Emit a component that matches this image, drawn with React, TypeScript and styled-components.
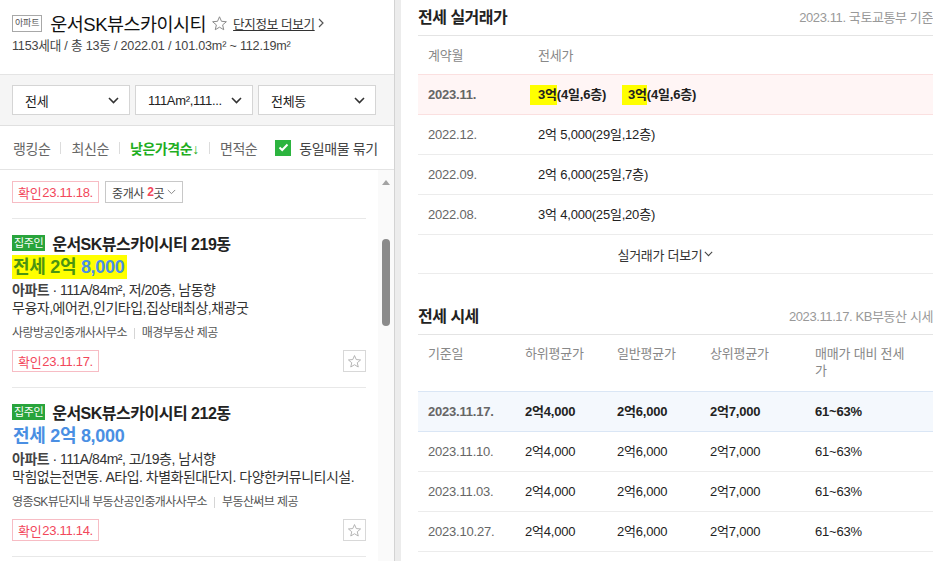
import React from "react";
import styled, { createGlobalStyle } from "styled-components";

const GlobalStyle = createGlobalStyle`
  html, body {
    margin: 0;
    padding: 0;
  }
  body {
    font-family: "Liberation Sans", "Noto Sans CJK KR", sans-serif;
    color: #222;
    background: #fff;
    overflow: hidden;
  }
  * {
    box-sizing: border-box;
  }
`;

const Page = styled.div`
  display: flex;
  width: 933px;
  height: 561px;
  overflow: hidden;
`;

/* ---------- left panel ---------- */

const LeftPanel = styled.aside`
  width: 395px;
  flex-shrink: 0;
  display: flex;
  flex-direction: column;
  border-right: 1px solid #d3d3d3;
`;

const Gutter = styled.div`
  width: 6px;
  flex-shrink: 0;
  background: #ececec;
`;

const Header = styled.header`
  height: 75px;
  padding: 13px 12px 0;
  border-bottom: 1px solid #e4e4e4;
`;

const TitleRow = styled.div`
  display: flex;
  align-items: center;
  height: 20px;
`;

const TypeTag = styled.span`
  height: 17px;
  line-height: 15px;
  padding: 0 2px;
  border: 1px solid #a8a8a8;
  color: #555;
  font-size: 9px;
  letter-spacing: -0.2px;
  margin-right: 8px;
`;

const ComplexName = styled.h1`
  margin: 0 5px 0 0;
  font-size: 18.5px;
  font-weight: 400;
  letter-spacing: -0.5px;
  color: #111;
`;

const InfoLink = styled.a`
  display: flex;
  align-items: center;
  gap: 3px;
  margin-left: 5px;
  font-size: 12.5px;
  letter-spacing: -0.3px;
  color: #333;
  text-decoration: underline;
`;

const SubInfo = styled.div`
  margin-top: 5px;
  font-size: 12.6px;
  line-height: 16px;
  color: #444;
  letter-spacing: -0.2px;
`;

const FilterBar = styled.div`
  height: 51px;
  display: flex;
  gap: 5px;
  padding: 10px 12px 0;
  background: #f5f5f5;
  border-bottom: 1px solid #e0e0e0;
`;

const Select = styled.div`
  width: 118px;
  height: 30px;
  display: flex;
  align-items: center;
  justify-content: space-between;
  padding: 0 10px 0 12px;
  background: #fff;
  border: 1px solid #d5d5d5;
  font-size: 13px;
  letter-spacing: -0.3px;
  color: #222;
`;

const SortBar = styled.div`
  height: 44px;
  display: flex;
  align-items: center;
  padding: 0 13px;
  border-bottom: 1px solid #e4e4e4;
`;

const SortItem = styled.span<{ $active?: boolean }>`
  font-size: 14px;
  letter-spacing: -0.4px;
  color: ${(p) => (p.$active ? "#1fae1f" : "#666")};
  font-weight: ${(p) => (p.$active ? 700 : 400)};
`;

const SortDivider = styled.span`
  width: 1px;
  height: 12px;
  margin: 0 10px;
  background: #dcdcdc;
`;

const CheckBox = styled.span`
  width: 16px;
  height: 16px;
  margin-left: 18px;
  margin-right: 8px;
  display: flex;
  align-items: center;
  justify-content: center;
  background: #2cb43f;
`;

const CheckLabel = styled.span`
  font-size: 14px;
  letter-spacing: -0.4px;
  color: #444;
`;

const ListArea = styled.div`
  flex: 1;
  min-height: 0;
  display: flex;
`;

const ListBody = styled.div`
  width: 378px;
  padding: 0 12px;
  overflow: hidden;
`;

const TailRow = styled.div`
  display: flex;
  gap: 6px;
  padding: 11px 0 15px;
  border-bottom: 1px solid #e8e8e8;
`;

const ConfirmTag = styled.span`
  height: 22px;
  display: inline-flex;
  align-items: center;
  gap: 1px;
  padding: 0 5px;
  border: 1px solid #f7bcc4;
  color: #f2475b;
  font-size: 13px;
  letter-spacing: -0.3px;
`;

const BrokerTag = styled.span`
  height: 22px;
  display: inline-flex;
  align-items: center;
  padding: 0 6px;
  border: 1px solid #c8c8c8;
  color: #444;
  font-size: 12px;
  letter-spacing: -0.3px;

  b {
    color: #f2475b;
    margin-left: 3px;
  }
`;

const Card = styled.article`
  padding: 16px 0 15px;
  border-bottom: 1px solid #e8e8e8;
`;

const CardTitleRow = styled.div`
  display: flex;
  align-items: center;
  gap: 7px;
  height: 16px;
`;

const OwnerBadge = styled.span`
  height: 16px;
  line-height: 16px;
  padding: 0 2px;
  background: #29a43c;
  color: #fff;
  font-size: 11px;
  letter-spacing: -0.4px;
`;

const CardTitle = styled.h3`
  margin: 0;
  font-size: 16px;
  font-weight: 700;
  letter-spacing: -0.5px;
  color: #222;
`;

const PriceLine = styled.div`
  margin-top: 4px;
  height: 24px;
  line-height: 24px;
  font-size: 18px;
  font-weight: 700;
  letter-spacing: -0.3px;
  color: #4a8fe3;
`;

const PriceMark = styled.span<{ $marked?: boolean }>`
  display: inline-block;
  padding: 0 3px 0 1px;
  background: ${(p) => (p.$marked ? "#ffff00" : "transparent")};
`;

const PriceHead = styled.span<{ $marked?: boolean }>`
  color: ${(p) => (p.$marked ? "#4c9412" : "#4a8fe3")};
`;

const Detail = styled.div`
  margin-top: 2px;
  font-size: 14px;
  line-height: 18px;
  letter-spacing: -0.5px;
  color: #333;

  & + & {
    margin-top: 0;
  }

  b {
    color: #444;
  }
`;

const Agency = styled.div`
  margin-top: 8px;
  display: flex;
  align-items: center;
  font-size: 12px;
  line-height: 16px;
  letter-spacing: -0.6px;
  color: #555;
`;

const AgencyDivider = styled.span`
  width: 1px;
  height: 11px;
  margin: 0 7px;
  background: #d5d5d5;
`;

const CardFoot = styled.div`
  margin-top: 9px;
  display: flex;
  align-items: center;
  justify-content: space-between;
`;

const StarBox = styled.span`
  width: 23px;
  height: 22px;
  display: flex;
  align-items: center;
  justify-content: center;
  border: 1px solid #d8d8d8;
`;

const ScrollTrack = styled.div`
  width: 16px;
  flex-shrink: 0;
  display: flex;
  flex-direction: column;
  align-items: center;
  padding-top: 10px;
  background: #fafafa;
`;

const ScrollArrow = styled.span`
  width: 0;
  height: 0;
  border-left: 4px solid transparent;
  border-right: 4px solid transparent;
  border-bottom: 5px solid #a3a3a3;
`;

const ScrollThumb = styled.span`
  width: 8px;
  height: 87px;
  margin-top: 54px;
  border-radius: 4px;
  background: #8b8b8b;
`;

/* ---------- right panel ---------- */

const RightPanel = styled.main`
  flex: 1;
  overflow: hidden;
  padding-left: 17px;
`;

const Section = styled.section<{ $gap?: number }>`
  width: 515px;
  margin-top: ${(p) => p.$gap || 0}px;
`;

const SectionHead = styled.div`
  height: 36px;
  display: flex;
  align-items: center;
  justify-content: space-between;
  padding-bottom: 3px;
  border-bottom: 1px solid #e4e4e4;
`;

const SectionTitle = styled.h2`
  margin: 0;
  font-size: 16px;
  font-weight: 700;
  letter-spacing: -0.5px;
  color: #222;
`;

const SectionNote = styled.span`
  font-size: 13px;
  letter-spacing: -0.4px;
  color: #999;
  white-space: nowrap;
`;

const Row = styled.div<{ $cols: string; $tone?: "pink" | "blue"; $head?: boolean; $tall?: boolean }>`
  display: grid;
  grid-template-columns: ${(p) => p.$cols};
  align-items: ${(p) => (p.$tall ? "start" : "center")};
  height: ${(p) => (p.$tall ? 56 : p.$head ? 38 : p.$tone ? 41 : 40)}px;
  padding-top: ${(p) => (p.$tall ? 10 : 0)}px;
  font-size: 13px;
  letter-spacing: -0.2px;
  line-height: 17px;
  color: ${(p) => (p.$head ? "#888" : "#222")};
  font-weight: ${(p) => (p.$tone ? 700 : 400)};
  background: ${(p) =>
    p.$tone === "pink" ? "#fff5f5" : p.$tone === "blue" ? "#f4f8fd" : "transparent"};
  border-top: ${(p) =>
    p.$tone === "pink" ? "1px solid #fbe0e0" : p.$tone === "blue" ? "1px solid #dae6f5" : "none"};
  border-bottom: ${(p) =>
    p.$head
      ? "none"
      : p.$tone === "pink"
      ? "1px solid #fbe0e0"
      : p.$tone === "blue"
      ? "1px solid #dae6f5"
      : "1px solid #ececec"};
`;

const Cell = styled.div<{ $date?: boolean }>`
  padding-left: 10px;
  color: ${(p) => (p.$date ? "#666" : "inherit")};
  white-space: nowrap;
`;

const WrapCell = styled.div`
  padding-left: 10px;
  max-width: 108px;
`;

const TradeItem = styled.span`
  margin-right: 22px;
`;

const Marker = styled.span<{ $pad: number }>`
  display: inline-block;
  line-height: 20px;
  margin-left: -${(p) => p.$pad}px;
  padding-left: ${(p) => p.$pad}px;
  background: #ffff00;
`;

const MoreRow = styled.div`
  height: 39px;
  display: flex;
  align-items: center;
  justify-content: center;
  gap: 2px;
  padding-right: 20px;
  font-size: 13px;
  letter-spacing: -0.3px;
  color: #333;
  border-bottom: 1px solid #ececec;
`;

/* ---------- icons ---------- */

const Star = ({ size, color }: { size: number; color: string }) => (
  <svg width={size} height={size} viewBox="0 0 24 24">
    <polygon
      points="12,2.5 14.8,8.9 21.7,9.5 16.4,14 18,20.8 12,17.2 6,20.8 7.6,14 2.3,9.5 9.2,8.9"
      fill="none"
      stroke={color}
      strokeWidth="1.4"
      strokeLinejoin="round"
    />
  </svg>
);

const ChevronDown = ({ w = 11, h = 7, color = "#333", sw = 1.6 }) => (
  <svg width={w} height={h} viewBox="0 0 11 7">
    <polyline points="1,1 5.5,5.5 10,1" fill="none" stroke={color} strokeWidth={sw} />
  </svg>
);

const ChevronRight = () => (
  <svg width="6" height="10" viewBox="0 0 6 10">
    <polyline points="1,1 5,5 1,9" fill="none" stroke="#555" strokeWidth="1.2" />
  </svg>
);

const Check = () => (
  <svg width="11" height="9" viewBox="0 0 11 9">
    <polyline points="1.5,4.5 4.2,7 9.5,1.5" fill="none" stroke="#fff" strokeWidth="2" />
  </svg>
);

/* ---------- data ---------- */

const listings = [
  {
    dong: "219동",
    head: "전세 2억",
    tail: "8,000",
    marked: true,
    spec: "111A/84m², 저/20층, 남동향",
    desc: "무융자,에어컨,인기타입,집상태최상,채광굿",
    agent: "사랑방공인중개사사무소",
    provider: "매경부동산 제공",
    confirmed: "23.11.17.",
  },
  {
    dong: "212동",
    head: "전세 2억",
    tail: "8,000",
    marked: false,
    spec: "111A/84m², 고/19층, 남서향",
    desc: "막힘없는전면동. A타입. 차별화된대단지. 다양한커뮤니티시설.",
    agent: "영종SK뷰단지내 부동산공인중개사사무소",
    provider: "부동산써브 제공",
    confirmed: "23.11.14.",
  },
];

const trades = [
  { month: "2022.12.", price: "2억 5,000(29일,12층)" },
  { month: "2022.09.", price: "2억 6,000(25일,7층)" },
  { month: "2022.08.", price: "3억 4,000(25일,20층)" },
];

const quotes = [
  { date: "2023.11.17.", low: "2억4,000", mid: "2억6,000", high: "2억7,000", ratio: "61~63%" },
  { date: "2023.11.10.", low: "2억4,000", mid: "2억6,000", high: "2억7,000", ratio: "61~63%" },
  { date: "2023.11.03.", low: "2억4,000", mid: "2억6,000", high: "2억7,000", ratio: "61~63%" },
  { date: "2023.10.27.", low: "2억4,000", mid: "2억6,000", high: "2억7,000", ratio: "61~63%" },
];

const tradeCols = "110px 1fr";
const quoteCols = "97px 92px 93px 105px 1fr";

const App: React.FC = () => {
  return (
    <Page>
      <GlobalStyle />
      <LeftPanel>
        <Header>
          <TitleRow>
            <TypeTag>아파트</TypeTag>
            <ComplexName>운서SK뷰스카이시티</ComplexName>
            <Star size={17} color="#8a8a8a" />
            <InfoLink>
              단지정보 더보기 <ChevronRight />
            </InfoLink>
          </TitleRow>
          <SubInfo>1153세대 / 총 13동 / 2022.01 / 101.03m² ~ 112.19m²</SubInfo>
        </Header>

        <FilterBar>
          <Select>
            전세 <ChevronDown />
          </Select>
          <Select>
            111Am²,111... <ChevronDown />
          </Select>
          <Select>
            전체동 <ChevronDown />
          </Select>
        </FilterBar>

        <SortBar>
          <SortItem>랭킹순</SortItem>
          <SortDivider />
          <SortItem>최신순</SortItem>
          <SortDivider />
          <SortItem $active>낮은가격순↓</SortItem>
          <SortDivider />
          <SortItem>면적순</SortItem>
          <CheckBox>
            <Check />
          </CheckBox>
          <CheckLabel>동일매물 묶기</CheckLabel>
        </SortBar>

        <ListArea>
          <ListBody>
            <TailRow>
              <ConfirmTag>
                확인<span>23.11.18.</span>
              </ConfirmTag>
              <BrokerTag>
                중개사<b>2</b>곳&nbsp;
                <ChevronDown w={9} h={6} color="#888" sw={1.2} />
              </BrokerTag>
            </TailRow>

            {listings.map((item) => (
              <Card key={item.dong}>
                <CardTitleRow>
                  <OwnerBadge>집주인</OwnerBadge>
                  <CardTitle>운서SK뷰스카이시티 {item.dong}</CardTitle>
                </CardTitleRow>
                <PriceLine>
                  <PriceMark $marked={item.marked}>
                    <PriceHead $marked={item.marked}>{item.head}</PriceHead> {item.tail}
                  </PriceMark>
                </PriceLine>
                <Detail>
                  <b>아파트</b> · {item.spec}
                </Detail>
                <Detail>{item.desc}</Detail>
                <Agency>
                  {item.agent}
                  <AgencyDivider />
                  {item.provider}
                </Agency>
                <CardFoot>
                  <ConfirmTag>
                    확인<span>{item.confirmed}</span>
                  </ConfirmTag>
                  <StarBox>
                    <Star size={15} color="#aaa" />
                  </StarBox>
                </CardFoot>
              </Card>
            ))}
          </ListBody>
          <ScrollTrack>
            <ScrollArrow />
            <ScrollThumb />
          </ScrollTrack>
        </ListArea>
      </LeftPanel>

      <Gutter />

      <RightPanel>
        <Section>
          <SectionHead>
            <SectionTitle>전세 실거래가</SectionTitle>
            <SectionNote>2023.11. 국토교통부 기준</SectionNote>
          </SectionHead>
          <Row $cols={tradeCols} $head>
            <Cell>계약월</Cell>
            <Cell>전세가</Cell>
          </Row>
          <Row $cols={tradeCols} $tone="pink">
            <Cell $date>2023.11.</Cell>
            <Cell>
              <TradeItem>
                <Marker $pad={8}>3억</Marker>(4일,6층)
              </TradeItem>
              <TradeItem>
                <Marker $pad={6}>3억</Marker>(4일,6층)
              </TradeItem>
            </Cell>
          </Row>
          {trades.map((t) => (
            <Row $cols={tradeCols} key={t.month}>
              <Cell $date>{t.month}</Cell>
              <Cell>{t.price}</Cell>
            </Row>
          ))}
          <MoreRow>
            실거래가 더보기
            <ChevronDown w={9} h={6} color="#444" sw={1.3} />
          </MoreRow>
        </Section>

        <Section $gap={25}>
          <SectionHead>
            <SectionTitle>전세 시세</SectionTitle>
            <SectionNote>2023.11.17. KB부동산 시세</SectionNote>
          </SectionHead>
          <Row $cols={quoteCols} $head $tall>
            <Cell>기준일</Cell>
            <Cell>하위평균가</Cell>
            <Cell>일반평균가</Cell>
            <Cell>상위평균가</Cell>
            <WrapCell>매매가 대비 전세가</WrapCell>
          </Row>
          {quotes.map((q, i) => (
            <Row $cols={quoteCols} $tone={i === 0 ? "blue" : undefined} key={q.date}>
              <Cell $date>{q.date}</Cell>
              <Cell>{q.low}</Cell>
              <Cell>{q.mid}</Cell>
              <Cell>{q.high}</Cell>
              <Cell>{q.ratio}</Cell>
            </Row>
          ))}
        </Section>
      </RightPanel>
    </Page>
  );
};

export default App;
